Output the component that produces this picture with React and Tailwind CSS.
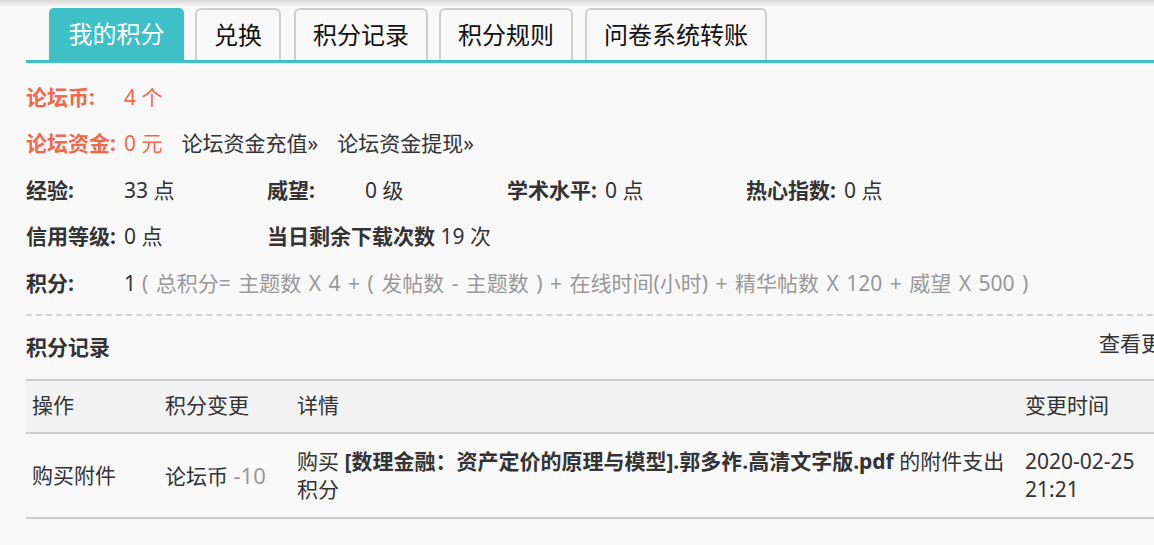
import React from "react";

const font = { fontFamily: '"Noto Sans", "Noto Sans CJK SC", sans-serif' };

function Tab({ children, active, className = "" }) {
  if (active) {
    return (
      <div className={"h-[52px] px-[19.5px] flex items-center rounded-t-[5px] bg-[#3fc0c6] text-white text-[24px] " + className}>
        {children}
      </div>
    );
  }
  return (
    <div className={"h-[52px] px-[17px] flex items-center rounded-t-[6px] border-2 border-b-0 border-[#cfcfcf] bg-[#f8f8f8] text-[#111] text-[24px] " + className}>
      {children}
    </div>
  );
}

function Label({ children, className = "" }) {
  return (
    <span className={"inline-block min-w-[98px] font-bold whitespace-pre " + className}>
      {children}
    </span>
  );
}

export default function App() {
  return (
    <div className="w-screen h-[545px] overflow-hidden bg-[#f8f8f8] relative" style={font}>
      <div className="absolute top-0 left-0 right-0 h-[7px] bg-gradient-to-b from-[#d6d6d6] to-[#f8f8f8]" />
      <div className="w-[1157px] ml-[26px] pt-[8px] relative">
        {/* Tabs */}
        <div className="flex items-end pl-[23px] border-b-[3px] border-[#3fc0c6] w-[1200px]">
          <Tab active>我的积分</Tab>
          <Tab className="ml-[11px]">兑换</Tab>
          <Tab className="ml-[13px]">积分记录</Tab>
          <Tab className="ml-[11px]">积分规则</Tab>
          <Tab className="ml-[12px]">问卷系统转账</Tab>
        </div>

        {/* Info rows */}
        <div className="pt-[11px] text-[21px] text-[#333]">
          <div className="h-[46.5px] flex items-center text-[#f1694b]">
            <Label>论坛币:</Label>
            <span>4 个</span>
          </div>
          <div className="h-[46.5px] flex items-center">
            <Label className="text-[#f1694b]">论坛资金:</Label>
            <span className="text-[#f1694b]">0 元</span>
            <span className="ml-[19px]">论坛资金充值»</span>
            <span className="ml-[19px]">论坛资金提现»</span>
          </div>
          <div className="h-[46.5px] grid grid-cols-[241px_240px_239px_240px] items-center">
            <div className="flex items-center"><Label>经验:</Label><span>33 点</span></div>
            <div className="flex items-center"><Label>威望:</Label><span>0 级</span></div>
            <div className="flex items-center"><Label>学术水平: </Label><span>0 点</span></div>
            <div className="flex items-center"><Label>热心指数: </Label><span>0 点</span></div>
          </div>
          <div className="h-[46.5px] grid grid-cols-[241px_240px] items-center">
            <div className="flex items-center"><Label>信用等级: </Label><span>0 点</span></div>
            <div className="flex items-center"><Label>当日剩余下载次数 </Label><span>19 次</span></div>
          </div>
          <div className="h-[46.5px] flex items-center whitespace-nowrap">
            <Label>积分:</Label>
            <span>1</span>
            <span className="text-[#999] ml-[6px] [word-spacing:2px]">( 总积分= 主题数 X 4 + ( 发帖数 - 主题数 ) + 在线时间(小时) + 精华帖数 X 120 + 威望 X 500 )</span>
          </div>
        </div>

        {/* Records */}
        <div className="mt-[7px] border-t-2 border-dashed border-[#d2d2d2]" />
        <div className="h-[63px] flex items-center justify-between">
          <span className="text-[21px] font-bold text-[#333] pt-[2px]">积分记录</span>
          <span className="text-[21px] text-[#333] -mt-[6px]">查看更多</span>
        </div>
        <table className="w-full border-collapse text-[21px] text-[#333] table-fixed">
          <colgroup>
            <col className="w-[133px]" />
            <col className="w-[132px]" />
            <col className="w-[728px]" />
            <col />
          </colgroup>
          <thead>
            <tr className="bg-[#f2f2f2] border-y-2 border-[#cdcdcd] h-[53px]">
              <th className="text-left font-normal pl-[6px]">操作</th>
              <th className="text-left font-normal pl-[6px]">积分变更</th>
              <th className="text-left font-normal pl-[6px]">详情</th>
              <th className="text-left font-normal pl-[6px]">变更时间</th>
            </tr>
          </thead>
          <tbody>
            <tr className="border-b-2 border-[#cdcdcd] h-[85px] leading-[28px]">
              <td className="pl-[6px] align-middle">购买附件</td>
              <td className="pl-[6px] align-middle">论坛币 <span className="text-[#999] text-[22px]">-10</span></td>
              <td className="pl-[6px] align-middle">
                购买 <b className="font-bold">[数理金融：资产定价的原理与模型].郭多祚.高清文字版.pdf</b> 的附件支出积分
              </td>
              <td className="pl-[6px] align-middle">2020-02-25 21:21</td>
            </tr>
          </tbody>
        </table>
      </div>
    </div>
  );
}
